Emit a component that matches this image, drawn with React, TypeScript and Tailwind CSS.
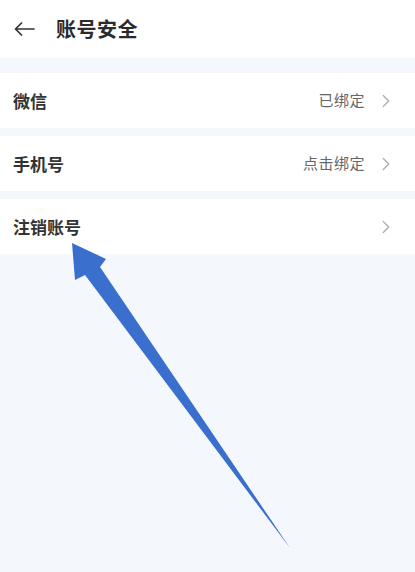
import { ChevronRight } from "lucide-react";

const rows = [
  { label: "微信", value: "已绑定" },
  { label: "手机号", value: "点击绑定" },
  { label: "注销账号", value: "" },
];

export default function App() {
  return (
    <div
      className="relative flex h-[572px] w-[415px] flex-col overflow-hidden bg-[#f4f7fb]"
      style={{ fontFamily: '"Noto Sans CJK SC", "Noto Sans", sans-serif' }}
    >
      {/* header */}
      <header className="flex h-[58px] items-center gap-[21px] bg-white pl-[14px]">
        <svg width="21" height="14" viewBox="0 0 21 14" fill="none" stroke="#333" strokeWidth="1.7" strokeLinecap="round" strokeLinejoin="round">
          <path d="M20 7 H1.5 M7.5 1 L1.5 7 L7.5 13" />
        </svg>
        <span className="text-[20px] font-bold tracking-[0.5px] text-[#2b2b2b]">账号安全</span>
      </header>

      <div className="mt-[15px] flex flex-col gap-[8px]">
        {rows.map((row) => (
          <div
            key={row.label}
            className="flex h-[55px] items-center justify-between bg-white pl-[13px] pr-[18px]"
          >
            <span className="text-[17px] font-bold text-[#333]">{row.label}</span>
            <div className="flex items-center gap-[10px]">
              {row.value && (
                <span className="text-[15px] tracking-[0.5px] text-[#666]">{row.value}</span>
              )}
              <ChevronRight className="h-[22px] w-[22px] text-[#aaa]" strokeWidth={1.3} />
            </div>
          </div>
        ))}
      </div>

      {/* pointer arrow overlay */}
      <svg
        className="absolute left-0 top-0"
        width="415"
        height="572"
        viewBox="0 0 415 572"
      >
        <path
          d="M72 243 L106 259 L100 267 L290 548 L85 275 L75 280 Z"
          fill="#3a6fcd"
        />
      </svg>
    </div>
  );
}
